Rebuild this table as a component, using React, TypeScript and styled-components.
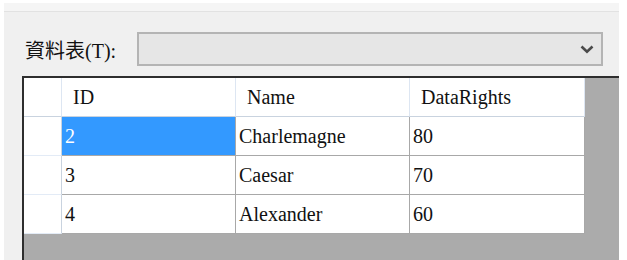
import React from "react";
import styled, { createGlobalStyle } from "styled-components";

const Global = createGlobalStyle`
  html, body { margin: 0; padding: 0; background: #ffffff; }
  body { width: 627px; height: 260px; overflow: hidden; }
`;

const Page = styled.div`
  width: 627px;
  height: 260px;
  background: #ffffff;
  padding: 3px 8px 0 4px;
  box-sizing: border-box;
  display: flex;
`;

const Panel = styled.div`
  flex: 1;
  display: flex;
  flex-direction: column;
  background: #f0f0f0;
  overflow: hidden;
`;

const TopStrip = styled.div`
  height: 8px;
  background: #f5f5f5;
  border-bottom: 1px solid #e2e2e2;
`;

const FormRow = styled.div`
  display: flex;
  align-items: center;
  height: 34px;
  margin-top: 20px;
  padding-left: 21px;
`;

const Label = styled.label`
  width: 112px;
  font-family: "Liberation Serif", "Noto Sans CJK TC", serif;
  font-size: 20px;
  color: #111;
  white-space: nowrap;
`;

const Combo = styled.div`
  width: 466px;
  height: 34px;
  box-sizing: border-box;
  border: 2px solid #b4b4b4;
  background: #e6e6e6;
  display: flex;
  align-items: center;
  justify-content: flex-end;
  padding-right: 7px;
`;

const GridFrame = styled.div`
  margin-top: 10px;
  margin-left: 18px;
  flex: 1;
  border-top: 2px solid #2e2e2e;
  border-left: 2px solid #2e2e2e;
  background: #ababab;
`;

const Table = styled.div`
  display: grid;
  grid-template-columns: 38px 174px 174px 175px;
  grid-auto-rows: 39px;
  width: max-content;
  font-family: "Liberation Serif", serif;
  font-size: 20px;
  color: #111;
`;

const Corner = styled.div`
  background: #ffffff;
  border-right: 1px solid #dde6f2;
  border-bottom: 1px solid #c9d3df;
`;

const ColHeader = styled.div`
  background: #ffffff;
  border-right: 1px solid #dde6f2;
  border-bottom: 1px solid #c9d3df;
  display: flex;
  align-items: center;
  padding-left: 11px;
`;

const RowHeader = styled.div`
  background: #ffffff;
  border-right: 1px solid #c9d3df;
  border-bottom: 1px solid #e3ebf6;
`;

const Cell = styled.div<{ $selected?: boolean }>`
  background: ${(p) => (p.$selected ? "#3399ff" : "#ffffff")};
  color: ${(p) => (p.$selected ? "#ffffff" : "#111111")};
  border-right: 1px solid #a8a8a8;
  border-bottom: 1px solid #a8a8a8;
  display: flex;
  align-items: center;
  padding-left: 3px;
`;

const rows = [
  { id: "2", name: "Charlemagne", rights: "80" },
  { id: "3", name: "Caesar", rights: "70" },
  { id: "4", name: "Alexander", rights: "60" },
];

export default function App() {
  return (
    <>
      <Global />
      <Page>
        <Panel>
          <TopStrip />
          <FormRow>
            <Label>資料表(T):</Label>
            <Combo>
              <svg width="14" height="9" viewBox="0 0 14 9">
                <polyline
                  points="1.5,1.5 7,6.8 12.5,1.5"
                  fill="none"
                  stroke="#4a4a4a"
                  strokeWidth="2.6"
                />
              </svg>
            </Combo>
          </FormRow>
          <GridFrame>
            <Table>
              <Corner />
              <ColHeader>ID</ColHeader>
              <ColHeader>Name</ColHeader>
              <ColHeader>DataRights</ColHeader>
              {rows.map((r, i) => (
                <React.Fragment key={r.id}>
                  <RowHeader />
                  <Cell $selected={i === 0}>{r.id}</Cell>
                  <Cell>{r.name}</Cell>
                  <Cell>{r.rights}</Cell>
                </React.Fragment>
              ))}
            </Table>
          </GridFrame>
        </Panel>
      </Page>
    </>
  );
}
